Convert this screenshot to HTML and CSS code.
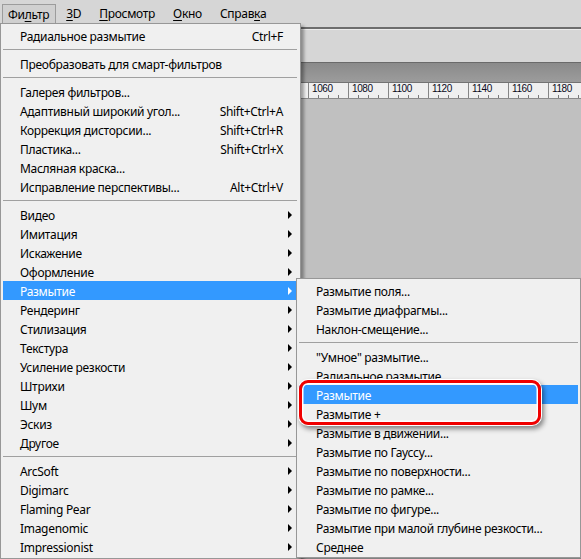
FILE: index.html
```html
<!DOCTYPE html>
<html lang="ru">
<head>
<meta charset="utf-8">
<title>Фильтр — Размытие</title>
<link rel="stylesheet" href="styles.css">
</head>
<body>
<div class="app">
  <nav class="menubar">
    <span class="mb-item active">Фи<u>л</u>ьтр</span>
    <span class="mb-item"><u>3</u>D</span>
    <span class="mb-item"><u>П</u>росмотр</span>
    <span class="mb-item"><u>О</u>кно</span>
    <span class="mb-item">Справ<u>к</u>а</span>
  </nav>

  <div class="workspace">
    <div class="optbar"></div>
    <div class="tabbar"></div>
    <div class="ruler">
      <span class="cell">1060</span>
      <span class="cell">1080</span>
      <span class="cell">1100</span>
      <span class="cell">1120</span>
      <span class="cell">1140</span>
      <span class="cell">1160</span>
      <span class="cell">1180</span>
    </div>
    <div class="canvas"></div>
  </div>

  <div class="menu main-menu">
    <div class="item"><span class="label">Радиальное размытие</span><span class="key">Ctrl+F</span></div>
    <div class="sep"></div>
    <div class="item"><span class="label">Преобразовать для смарт-фильтров</span></div>
    <div class="sep"></div>
    <div class="item"><span class="label">Галерея фильтров...</span></div>
    <div class="item"><span class="label">Адаптивный широкий угол...</span><span class="key">Shift+Ctrl+A</span></div>
    <div class="item"><span class="label">Коррекция дисторсии...</span><span class="key">Shift+Ctrl+R</span></div>
    <div class="item"><span class="label">Пластика...</span><span class="key">Shift+Ctrl+X</span></div>
    <div class="item"><span class="label">Масляная краска...</span></div>
    <div class="item"><span class="label">Исправление перспективы...</span><span class="key">Alt+Ctrl+V</span></div>
    <div class="sep"></div>
    <div class="item sub"><span class="label">Видео</span></div>
    <div class="item sub"><span class="label">Имитация</span></div>
    <div class="item sub"><span class="label">Искажение</span></div>
    <div class="item sub"><span class="label">Оформление</span></div>
    <div class="item sub hl"><span class="label">Размытие</span></div>
    <div class="item sub"><span class="label">Рендеринг</span></div>
    <div class="item sub"><span class="label">Стилизация</span></div>
    <div class="item sub"><span class="label">Текстура</span></div>
    <div class="item sub"><span class="label">Усиление резкости</span></div>
    <div class="item sub"><span class="label">Штрихи</span></div>
    <div class="item sub"><span class="label">Шум</span></div>
    <div class="item sub"><span class="label">Эскиз</span></div>
    <div class="item sub"><span class="label">Другое</span></div>
    <div class="sep"></div>
    <div class="item sub"><span class="label">ArcSoft</span></div>
    <div class="item sub"><span class="label">Digimarc</span></div>
    <div class="item sub"><span class="label">Flaming Pear</span></div>
    <div class="item sub"><span class="label">Imagenomic</span></div>
    <div class="item sub"><span class="label">Impressionist</span></div>
  </div>

  <div class="menu sub-menu">
    <div class="item"><span class="label">Размытие поля...</span></div>
    <div class="item"><span class="label">Размытие диафрагмы...</span></div>
    <div class="item"><span class="label">Наклон-смещение...</span></div>
    <div class="sep"></div>
    <div class="item"><span class="label">"Умное" размытие...</span></div>
    <div class="item"><span class="label">Радиальное размытие...</span></div>
    <div class="item hl"><span class="label">Размытие</span></div>
    <div class="item"><span class="label">Размытие +</span></div>
    <div class="item"><span class="label">Размытие в движении...</span></div>
    <div class="item"><span class="label">Размытие по Гауссу...</span></div>
    <div class="item"><span class="label">Размытие по поверхности...</span></div>
    <div class="item"><span class="label">Размытие по рамке...</span></div>
    <div class="item"><span class="label">Размытие по фигуре...</span></div>
    <div class="item"><span class="label">Размытие при малой глубине резкости...</span></div>
    <div class="item"><span class="label">Среднее</span></div>
  </div>

  <div class="callout"></div>
</div>
</body>
</html>
```

FILE: styles.css
```css
html, body {
  margin: 0;
  padding: 0;
}

body {
  width: 581px;
  height: 559px;
  overflow: hidden;
  background: #d6d6d6;
  font-family: "Noto Sans", "Open Sans", "DejaVu Sans", sans-serif;
  font-size: 12px;
  letter-spacing: -0.3px;
  color: #000;
}

.app {
  position: relative;
  height: 559px;
  display: flex;
  flex-direction: column;
}

/* ---------- menu bar ---------- */
.menubar {
  height: 27px;
  flex: none;
  display: flex;
  align-items: flex-start;
  gap: 2px;
  padding-left: 2px;
  box-sizing: border-box;
}

.mb-item {
  margin-top: 4px;
  height: 18px;
  line-height: 19px;
  padding: 0 8px;
  white-space: nowrap;
}

.mb-item u {
  text-decoration-thickness: 1px;
  text-underline-offset: 2px;
}

.mb-item.active {
  margin-top: 4px;
  height: 19px;
  padding: 0 6px 0 5px;
  background: #d0d0d0;
  border: 1px solid #9c9c9c;
  border-bottom: none;
}

/* ---------- workspace ---------- */
.workspace {
  flex: 1;
  display: flex;
  flex-direction: column;
}

.optbar {
  height: 33px;
  flex: none;
  border-top: 2px solid #6d6d6d;
  border-bottom: 1px solid #6a6a6a;
  box-shadow: inset 0 1px 0 #ececec;
  background: #d6d6d6;
}

.tabbar {
  height: 19px;
  flex: none;
  background: linear-gradient(#8a8a8a, #9c9c9c);
  border-bottom: 1px solid #727272;
}

.ruler {
  height: 15px;
  flex: none;
  display: flex;
  padding-left: 308px;
  background: #efefef;
  border-bottom: 1px solid #8a8a8a;
  overflow: hidden;
}

.cell {
  flex: none;
  width: 40px;
  box-sizing: border-box;
  border-left: 1px solid #858585;
  padding-left: 3px;
  font-family: "Liberation Sans", sans-serif;
  font-size: 10px;
  letter-spacing: -0.4px;
  line-height: 11px;
  color: #0a0a1a;
  background:
    linear-gradient(#7a7a7a, #7a7a7a) 9px 100% / 1px 3px no-repeat,
    linear-gradient(#7a7a7a, #7a7a7a) 19px 100% / 1px 3px no-repeat,
    linear-gradient(#7a7a7a, #7a7a7a) 29px 100% / 1px 3px no-repeat;
}

.canvas {
  flex: 1;
  background: #c0c0c0;
}

/* ---------- drop-down menus ---------- */
.menu {
  position: absolute;
  box-sizing: border-box;
  background: #f0f0f0;
  border: 1px solid #979797;
  box-shadow: 3px 3px 3px rgba(0, 0, 0, 0.35);
}

.main-menu {
  left: 0;
  top: 23px;
  width: 301px;
  padding: 2px 3px 2px 2px;
}

.sub-menu {
  left: 296px;
  top: 278px;
  width: 285px;
  padding: 2px 2px 1px 2px;
}

.item {
  height: 19px;
  box-sizing: border-box;
  display: flex;
  align-items: center;
  padding: 1px 14px 0 17px;
  white-space: nowrap;
}

.item .label {
  flex: 1;
}

.item .key {
  flex: none;
}

.item.sub::after {
  content: "";
  flex: none;
  width: 0;
  height: 0;
  margin-right: -9px;
  border-left: 4px solid #000;
  border-top: 4px solid transparent;
  border-bottom: 4px solid transparent;
}

.item.hl {
  background: #3399ff;
  color: #fff;
}

.item.hl.sub::after {
  border-left-color: #fff;
}

.sep {
  height: 1px;
  margin: 4px 0;
  background: #a0a0a0;
}

/* ---------- red callout ---------- */
.callout {
  position: absolute;
  left: 299px;
  top: 380px;
  width: 242px;
  height: 45px;
  box-sizing: border-box;
  border: 3px solid #f00000;
  border-radius: 9px;
  box-shadow:
    0 0 0 1px #ffffff,
    inset 0 0 0 1.5px #ffffff,
    2px 3px 5px 1px rgba(0, 0, 0, 0.45);
}
```
